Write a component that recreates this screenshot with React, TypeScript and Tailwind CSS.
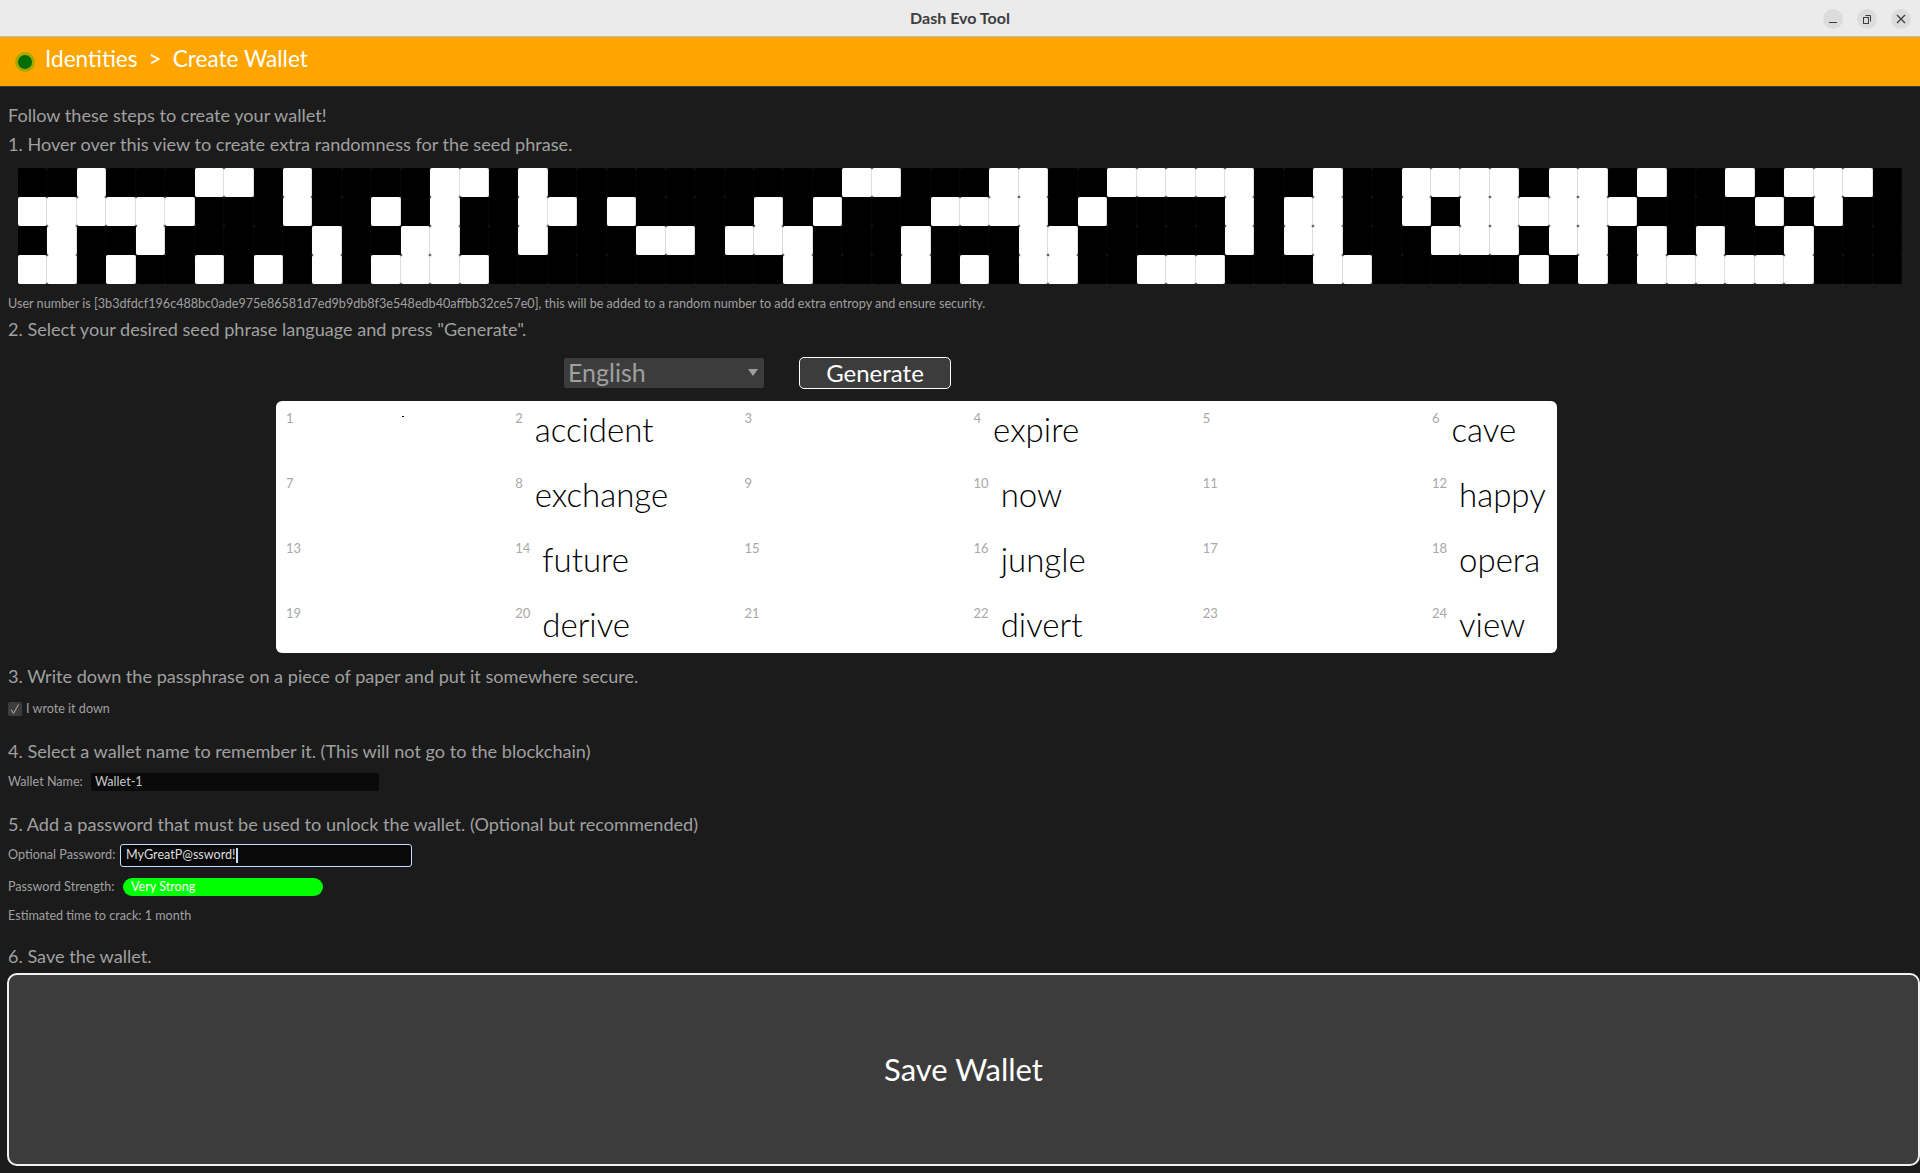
const rows: number[][] = [
  [2, 6, 7, 9, 14, 15, 17, 28, 29, 33, 34, 37, 38, 39, 40, 41, 44, 47, 48, 49, 50, 52, 53, 55, 58, 60, 61, 62],
  [0, 1, 2, 3, 4, 5, 9, 12, 14, 17, 18, 20, 25, 27, 31, 32, 33, 34, 36, 41, 43, 44, 47, 49, 50, 51, 52, 53, 54, 59, 61],
  [1, 4, 10, 13, 14, 17, 21, 22, 24, 25, 26, 30, 34, 35, 41, 43, 44, 48, 49, 50, 52, 53, 55, 57, 60],
  [0, 1, 3, 6, 8, 10, 12, 13, 14, 15, 26, 30, 32, 34, 35, 38, 39, 40, 44, 45, 51, 53, 55, 56, 57, 58, 59, 60],
];

const words: Record<number, string> = {
  2: "accident", 4: "expire", 6: "cave",
  8: "exchange", 10: "now", 12: "happy",
  14: "future", 16: "jungle", 18: "opera",
  20: "derive", 22: "divert", 24: "view",
};

function Step({ text, className }: { text: string; className: string }) {
  return <div className={`flex items-center text-[18.1px] ${className}`}>{text}</div>;
}

export default function App() {
  return (
    <div className="h-[1173px] w-[1920px] overflow-hidden bg-[#1b1b1b] font-['Lato',sans-serif] text-[#a0a0a0]">
      <div className="relative flex h-[37px] items-center justify-center border-b border-[#bdbdbd] bg-[#ebebeb] text-[16px] font-bold text-[#3d3d3d]">
        Dash Evo Tool
        <div className="absolute right-[9px] top-[9px] flex gap-[14px]">
          <div className="flex h-[20px] w-[20px] items-center justify-center rounded-full bg-[#dcdcdc]">
            <svg width="20" height="20" viewBox="0 0 20 20"><path d="M6 13.5h8" stroke="#3d3d3d" strokeWidth="1" /></svg>
          </div>
          <div className="flex h-[20px] w-[20px] items-center justify-center rounded-full bg-[#dcdcdc]">
            <svg width="20" height="20" viewBox="0 0 20 20" fill="none" stroke="#3d3d3d"><rect x="6.5" y="8.5" width="5" height="6" /><path d="M8.5 6.5h5v6" /></svg>
          </div>
          <div className="flex h-[20px] w-[20px] items-center justify-center rounded-full bg-[#dcdcdc]">
            <svg width="20" height="20" viewBox="0 0 20 20"><path d="M6 6l8 8M14 6l-8 8" stroke="#3d3d3d" strokeWidth="1.3" /></svg>
          </div>
        </div>
      </div>

      <div className="flex h-[50px] items-center border-b border-[#3c3c3c] bg-[#ffa500] pl-[15px] text-[22.6px] text-white">
        <div className="flex h-[20px] w-[20px] items-center justify-center rounded-full bg-[#aaa800]">
          <div className="h-[14px] w-[14px] rounded-full bg-[#006f00]" />
        </div>
        <span className="mb-[5px] ml-[10px]">Identities</span>
        <span className="mb-[5px] ml-[11px]">&gt;</span>
        <span className="mb-[5px] ml-[11px]">Create Wallet</span>
      </div>

      <div className="pt-[15px]">
        <div className="px-2">
          <Step text="Follow these steps to create your wallet!" className="h-[28px]" />
          <Step text="1. Hover over this view to create extra randomness for the seed phrase." className="h-[30px]" />
        </div>

        <div className="ml-[18px] mt-2 grid h-[116px] w-[1884px] grid-cols-[repeat(64,minmax(0,1fr))] grid-rows-4">
          {rows.flatMap((row, r) =>
            Array.from({ length: 64 }, (_, c) => (
              <div
                key={`${r}-${c}`}
                className={`rounded-[2px] border-r ${row.includes(c) ? "border-[#dedede] bg-white" : "border-[#060606] bg-black"}`}
              />
            )),
          )}
        </div>

        <div className="px-2">
          <div className="flex h-[40px] items-center text-[12.6px]">
            User number is [3b3dfdcf196c488bc0ade975e86581d7ed9b9db8f3e548edb40affbb32ce57e0], this will be added to a random number to add extra entropy and ensure security.
          </div>
          <Step text={'2. Select your desired seed phrase language and press "Generate".'} className="h-[12px]" />
        </div>

        <div className="ml-[564px] mt-[21px] flex h-[32px] items-center">
          <div className="relative flex h-[30px] w-[200px] items-center rounded-[2px] bg-[#3c3c3c] pl-[4px] text-[25px]">
            English
            <div className="absolute right-[6px] top-[11px] h-0 w-0 border-x-[5px] border-t-[7px] border-x-transparent border-t-[#a0a0a0]" />
          </div>
          <button className="ml-[35px] flex h-[32px] w-[152px] items-center justify-center rounded-[5px] border border-white bg-[#3c3c3c] text-[24px] text-white">
            Generate
          </button>
        </div>

        <div className="relative ml-[276px] mt-3 grid h-[252px] w-[1281px] grid-cols-[repeat(5,229.2px)_1fr] grid-rows-[repeat(4,65px)] rounded-[6px] bg-white pl-[10px] text-black">
          <div className="absolute left-[126px] top-[15px] h-[1px] w-[2px] bg-black" />
          {Array.from({ length: 24 }, (_, i) => i + 1).map((n) => (
            <div key={n} className="flex items-start">
              <span className="mt-[9px] text-[13px] leading-4 text-[#a8a8a8]">{n}</span>
              {words[n] && <span className="ml-[12px] mt-[6px] text-[33px] leading-[44px] font-light">{words[n]}</span>}
            </div>
          ))}
        </div>

        <div className="px-2">
          <Step text="3. Write down the passphrase on a piece of paper and put it somewhere secure." className="h-[48px]" />
          <div className="flex h-[16px] items-center text-[12.6px]">
            <div className="flex h-[14px] w-[14px] items-center justify-center rounded-[2px] bg-[#3c3c3c]">
              <svg width="12" height="12" viewBox="0 0 12 12" fill="none"><path d="M2 6.5L4.5 10.5L9.5 1.5" stroke="#b4b4b4" strokeWidth="1" /></svg>
            </div>
            <span className="ml-[4px]">I wrote it down</span>
          </div>
          <Step text="4. Select a wallet name to remember it. (This will not go to the blockchain)" className="mt-[17px] h-[36px]" />
          <div className="mt-[3px] flex h-[18px] items-center text-[12.6px]">
            <span className="w-[83px]">Wallet Name:</span>
            <div className="flex h-[18px] w-[288px] items-center rounded-[2px] bg-[#0a0a0a] pl-[4px] text-[#c8c8c8]">Wallet-1</div>
          </div>
          <Step text="5. Add a password that must be used to unlock the wallet. (Optional but recommended)" className="mt-[15px] h-[38px]" />
          <div className="flex h-[23px] items-center text-[12.6px]">
            <span className="w-[112px]">Optional Password:</span>
            <div className="flex h-[23px] w-[292px] items-center rounded-[3px] border border-[#c0deff] bg-[#0a0a0a] pl-[5px] text-[#dcdcdc]">
              MyGreatP@ssword!
              <span className="h-[15px] w-[2px] bg-[#c0deff]" />
            </div>
          </div>
          <div className="mt-[11px] flex h-[18px] items-center text-[12.6px]">
            <span className="w-[115px]">Password Strength:</span>
            <div className="flex h-[18px] w-[200px] items-center rounded-full bg-[#00ff00] pl-[8px] text-white">Very Strong</div>
          </div>
          <div className="mt-[10px] flex h-[20px] items-center text-[12.6px]">Estimated time to crack: 1 month</div>
          <Step text="6. Save the wallet." className="mt-[16px] h-[30px]" />
          <button className="-ml-px mt-[1px] flex h-[193px] w-[1913px] items-center justify-center rounded-[10px] border-2 border-[#f0f0f0] bg-[#3c3c3c] text-[31px] text-white">
            Save Wallet
          </button>
        </div>
      </div>
    </div>
  );
}
